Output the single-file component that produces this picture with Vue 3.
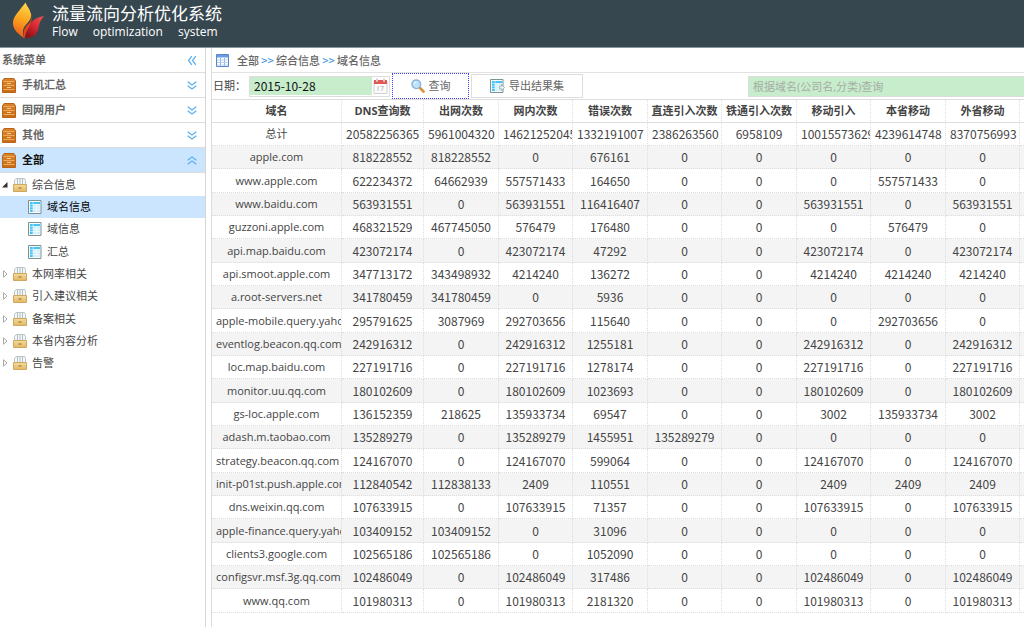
<script setup>
import { ref } from 'vue'

const date = ref('2015-10-28')
const keyword = ref('')
const groups = ['手机汇总', '固网用户', '其他', '全部']
const leaves = ['域名信息', '域信息', '汇总']
const folders = ['本网率相关', '引入建议相关', '备案相关', '本省内容分析', '告警']
const columns = ['域名', 'DNS查询数', '出网次数', '网内次数', '错误次数', '直连引入次数', '铁通引入次数', '移动引入', '本省移动', '外省移动']
const rows = [
  ['总计', 20582256365, 5961004320, 14621252045, 1332191007, 2386263560, 6958109, 10015573629, 4239614748, 8370756993],
  ['apple.com', 818228552, 818228552, 0, 676161, 0, 0, 0, 0, 0],
  ['www.apple.com', 622234372, 64662939, 557571433, 164650, 0, 0, 0, 557571433, 0],
  ['www.baidu.com', 563931551, 0, 563931551, 116416407, 0, 0, 563931551, 0, 563931551],
  ['guzzoni.apple.com', 468321529, 467745050, 576479, 176480, 0, 0, 0, 576479, 0],
  ['api.map.baidu.com', 423072174, 0, 423072174, 47292, 0, 0, 423072174, 0, 423072174],
  ['api.smoot.apple.com', 347713172, 343498932, 4214240, 136272, 0, 0, 4214240, 4214240, 4214240],
  ['a.root-servers.net', 341780459, 341780459, 0, 5936, 0, 0, 0, 0, 0],
  ['apple-mobile.query.yaho', 295791625, 3087969, 292703656, 115640, 0, 0, 0, 292703656, 0],
  ['eventlog.beacon.qq.com', 242916312, 0, 242916312, 1255181, 0, 0, 242916312, 0, 242916312],
  ['loc.map.baidu.com', 227191716, 0, 227191716, 1278174, 0, 0, 227191716, 0, 227191716],
  ['monitor.uu.qq.com', 180102609, 0, 180102609, 1023693, 0, 0, 180102609, 0, 180102609],
  ['gs-loc.apple.com', 136152359, 218625, 135933734, 69547, 0, 0, 3002, 135933734, 3002],
  ['adash.m.taobao.com', 135289279, 0, 135289279, 1455951, 135289279, 0, 0, 0, 0],
  ['strategy.beacon.qq.com', 124167070, 0, 124167070, 599064, 0, 0, 124167070, 0, 124167070],
  ['init-p01st.push.apple.com', 112840542, 112838133, 2409, 110551, 0, 0, 2409, 2409, 2409],
  ['dns.weixin.qq.com', 107633915, 0, 107633915, 71357, 0, 0, 107633915, 0, 107633915],
  ['apple-finance.query.yaho', 103409152, 103409152, 0, 31096, 0, 0, 0, 0, 0],
  ['clients3.google.com', 102565186, 102565186, 0, 1052090, 0, 0, 0, 0, 0],
  ['configsvr.msf.3g.qq.com', 102486049, 0, 102486049, 317486, 0, 0, 102486049, 0, 102486049],
  ['www.qq.com', 101980313, 0, 101980313, 2181320, 0, 0, 101980313, 0, 101980313],
]
</script>

<template>
  <div class="app">
    <svg class="defs" aria-hidden="true">
      <defs>
        <linearGradient id="wood" x1="0" y1="0" x2="0" y2="1">
          <stop offset="0" stop-color="#d9842c" /><stop offset="1" stop-color="#c66c14" />
        </linearGradient>
        <linearGradient id="box" x1="0" y1="0" x2="0" y2="1">
          <stop offset="0" stop-color="#f5dc9c" /><stop offset="1" stop-color="#e3b763" />
        </linearGradient>
        <linearGradient id="flameL" x1="0.7" y1="0" x2="0.5" y2="1">
          <stop offset="0" stop-color="#ffd84a" /><stop offset="0.5" stop-color="#fba31e" /><stop offset="1" stop-color="#ee5a1c" />
        </linearGradient>
        <linearGradient id="flameR" x1="1" y1="0" x2="0.3" y2="1">
          <stop offset="0" stop-color="#f0564a" /><stop offset="0.5" stop-color="#dc2a36" /><stop offset="1" stop-color="#8e1218" />
        </linearGradient>
        <symbol id="i-cabinet" viewBox="0 0 14 15">
          <path d="M2 .500h10L13.500 3v11.500H.500V3z" fill="url(#wood)" stroke="#b9641a" />
          <path d="M1.500 3.500h11M1.500 7.500h11M1.500 11.500h11" stroke="#f0ac5c" />
          <path d="M5 5.500h4M5 9.500h4" stroke="#f7cf94" />
        </symbol>
        <symbol id="i-folder" viewBox="0 0 14 14">
          <path d="M1.500 8V2.500L3 .500h8.500l1 2V8z" fill="#f4f7f7" stroke="#b9c5c7" />
          <path d="M4.500 1v6M7 1v6M9.500 1v6" stroke="#9fb1b4" stroke-width=".8" />
          <path d="M.500 6.500h13v7H.500z" fill="url(#box)" stroke="#cfa75e" />
          <path d="M5.500 10h3" stroke="#8a6a35" />
        </symbol>
        <symbol id="i-sheet" viewBox="0 0 14 14">
          <path d="M.500.500h12.500v13H.500z" fill="#f7fcff" stroke="#7c9295" />
          <path d="M2 2h10v2.500H2zM2 2h3v10H2z" fill="#45c4f7" />
          <path d="M5 4.500h7V12H5z" fill="#d3eefa" />
          <path d="M2 4.500h10M2 7h10M2 9.500h10M5 2v10M8.500 4v8" stroke="#fff" stroke-width=".5" />
        </symbol>
        <symbol id="i-chevrons" viewBox="0 0 10 9">
          <path d="M.700.700 5 4 9.300.700M.700 4.700 5 8l4.300-3.300" fill="none" stroke="#5eb0ee" stroke-width="1.300" />
        </symbol>
      </defs>
    </svg>

    <header class="banner">
      <svg class="logo" viewBox="0 0 34 37" aria-hidden="true">
        <path d="M14 0C9 7 1 14 1 21c0 7 5 11 12 16-3-6-2-11 2-15 4-4 6-8 4-12-1-4-4-6-5-10z" fill="url(#flameL)" />
        <path d="M33 14c-6 0-12 4-14 8-3 5-6 9-5 15 8-1 12-4 13-10 1-5 2-9 6-13z" fill="url(#flameR)" />
        <path d="M19 11c3 5 0 9-4 13-3 4-4 8-2 13 1-8 5-11 6-15 2-4 2-8 0-11z" fill="#e4431d" />
      </svg>
      <div>
        <h1>流量流向分析优化系统</h1>
        <p><span>Flow</span><span>optimization</span><span>system</span></p>
      </div>
    </header>

    <div class="body">
      <aside>
        <div class="bar">
          <h2>系统菜单</h2>
          <button class="collapse" aria-label="收起菜单"><svg class="chev left"><use href="#i-chevrons" /></svg></button>
        </div>
        <button v-for="(g, i) in groups" :key="g" class="bar group" :class="{ open: i === 3 }">
          <svg class="cabinet"><use href="#i-cabinet" /></svg>
          <span>{{ g }}</span>
          <svg class="chev" :class="{ up: i === 3 }"><use href="#i-chevrons" /></svg>
        </button>
        <nav class="tree">
          <a href="#"><svg class="arrow" viewBox="0 0 8 8"><path d="M6.500 1v5.500H1z" fill="#333" /></svg><svg class="icon"><use href="#i-folder" /></svg>综合信息</a>
          <a v-for="(l, i) in leaves" :key="l" href="#" class="leaf" :class="{ selected: i === 0 }"><svg class="icon"><use href="#i-sheet" /></svg>{{ l }}</a>
          <a v-for="f in folders" :key="f" href="#"><svg class="arrow" viewBox="0 0 8 8"><path d="M2.500.700v6.600L6 4z" fill="#fff" stroke="#aaa" /></svg><svg class="icon"><use href="#i-folder" /></svg>{{ f }}</a>
        </nav>
      </aside>

      <main>
        <nav class="crumbs">
          <svg class="grid-icon" viewBox="0 0 13 13" aria-hidden="true">
            <path d="M.500.500h12v12H.500z" fill="#fff" stroke="#5686cf" />
            <path d="M1 1h11v2.500H1z" fill="#6b9be0" />
            <path d="M4.500 4v8M8.500 4v8" stroke="#8fb0e2" />
            <path d="M1 6h11M1 8.500h11M1 11h11" stroke="#b9cfee" />
          </svg>
          <a href="#">全部</a><i>&gt;&gt;</i><a href="#">综合信息</a><i>&gt;&gt;</i><a href="#">域名信息</a>
        </nav>

        <form class="toolbar" @submit.prevent>
          <label for="date">日期：</label>
          <div class="date">
            <input id="date" v-model="date" type="text">
            <button type="button" aria-label="选择日期">
              <svg viewBox="0 0 15 16">
                <path d="M1 3h13v12.500H1z" fill="#fbfbfb" stroke="#cfcfcf" />
                <path d="M1 2h13v4H1z" fill="#e05a55" />
                <path d="M4 .500v3M11 .500v3" stroke="#fff" stroke-width="2" />
                <path d="M4 .500v3M11 .500v3" stroke="#b6a0a0" />
                <path d="M5 8v5M7.500 8.500h3L8.500 13" fill="none" stroke="#c2c2c2" />
              </svg>
            </button>
          </div>
          <button class="query" type="submit">
            <svg viewBox="0 0 14 14">
              <path d="m8.500 8.500 4 4" stroke="#d9913d" stroke-width="2.600" stroke-linecap="round" />
              <circle cx="5.300" cy="5.300" r="4.300" fill="#bfe3fb" stroke="#86b4dc" stroke-width="1.400" />
              <path d="M3 5a2.500 2.500 0 0 1 2.500-2.300" fill="none" stroke="#fff" />
            </svg>查询
          </button>
          <button class="export" type="button">
            <svg viewBox="0 0 15 14">
              <use href="#i-sheet" width="14" height="14" />
              <path d="M9.500 7.200H11.500V5.500L14.500 8.500 11.500 11.500V9.800H9.500z" fill="#eef5f5" stroke="#93a9aa" stroke-width=".8" />
            </svg>导出结果集
          </button>
          <input v-model="keyword" class="search" type="text" aria-label="查询关键字" placeholder="根据域名(公司名,分类)查询">
        </form>

        <table>
          <colgroup><col class="c-name"><col class="c-dns"><col v-for="n in 8" :key="n" :class="n % 2 ? 'c-a' : 'c-b'"><col></colgroup>
          <thead>
            <tr><th v-for="c in columns" :key="c" scope="col">{{ c }}</th><td class="rest"></td></tr>
          </thead>
          <tbody>
            <tr v-for="r in rows" :key="r[0]"><td v-for="(v, i) in r" :key="i" :class="{ name: i === 0 }">{{ v }}</td><td class="rest"></td></tr>
          </tbody>
        </table>
      </main>
    </div>
  </div>
</template>

<style>
html, body { margin: 0; background: #fff; }
</style>

<style scoped>
.app {
  font: 11px/16px "Open Sans", "Noto Sans CJK SC", sans-serif;
  color: #444;
  min-height: 100vh;
  display: flex;
  flex-direction: column;
  overflow: hidden;
}
.app * { box-sizing: border-box; }
.defs { position: absolute; width: 0; height: 0; }
svg { flex: none; display: block; }
button, input { font: inherit; color: inherit; margin: 0; }
a { color: inherit; text-decoration: none; }

.banner {
  height: 48px;
  display: flex;
  gap: 7px;
  padding: 1px 0 0 12px;
  background: #36474f;
  border-bottom: 1px solid #8b969c;
  color: #fff;
}
.logo { width: 33px; height: 37px; margin-top: 1px; }
h1 { margin: 0; font: 400 17px/24px "Noto Sans CJK SC", sans-serif; }
.banner p { margin: 0; display: flex; gap: 15px; font-size: 12px; line-height: 14px; }

.body { flex: 1; display: flex; gap: 5px; }
aside { width: 206px; flex: none; border-right: 1px solid #d6d6d6; }
.bar {
  width: 100%;
  height: 25px;
  display: flex;
  align-items: center;
  padding: 0 8px 0 2px;
  border: 0;
  border-bottom: 1px solid #dcdcdc;
  background: #fff;
  color: #666;
  text-align: left;
}
.bar h2 { flex: 1; margin: 0; font: inherit; font-weight: 700; }
.group { gap: 6px; font-weight: 700; }
.group span { flex: 1; }
.group.open { background: #cce5ff; color: #111; }
.collapse { border: 0; padding: 0; background: none; }
.cabinet { width: 14px; height: 15px; }
.chev { width: 10px; height: 9px; }
.chev.up { transform: rotate(180deg); }
.chev.left { transform: rotate(90deg); }
.tree a { display: flex; align-items: center; height: 22px; padding-left: 1px; }
.tree a:nth-child(3n + 1) { height: 23px; }
.tree .leaf { padding-left: 28px; }
.tree .selected { background: #cce5ff; color: #000; }
.arrow { width: 8px; height: 8px; margin-right: 4px; }
.icon { width: 14px; height: 14px; margin-right: 5px; }

main { flex: 1; min-width: 0; border-left: 1px solid #dcdcdc; }
.crumbs {
  height: 25px;
  display: flex;
  align-items: center;
  padding-left: 4px;
  border-bottom: 1px solid #e2e2e2;
  color: #666;
  font-weight: 500;
  font-family: "Noto Sans CJK SC", sans-serif;
}
.crumbs i { width: 17px; text-align: center; font-style: normal; color: #3a97dc; }
.grid-icon { width: 13px; height: 13px; margin-right: 8px; }

.toolbar { height: 26px; display: flex; align-items: center; padding-left: 1px; }
.toolbar label { width: 36px; }
.date { width: 141px; height: 21px; display: flex; border: 1px solid #ddd; background: #fff; }
.date input, .search {
  border: 0;
  outline: 0;
  background: #c7edcc;
  padding: 0 4px;
}
.date input { flex: 1; min-width: 0; height: 18px; font: 12px/16px "Noto Sans CJK SC", sans-serif; color: #111; }
.date button { border: 0; padding: 1px; background: none; }
.date svg { width: 15px; height: 16px; }
.query, .export {
  display: flex;
  align-items: center;
  justify-content: center;
  gap: 4px;
  padding: 0;
  background: #fff;
  color: #666;
}
.query svg { width: 14px; height: 14px; }
.export svg { width: 15px; height: 14px; }
.query { width: 77px; height: 26px; margin-left: 2px; border: 1px dotted #3c3cff; }
.export { width: 112px; height: 24px; margin-left: 2px; border: 1px solid #ddd; }
.search { flex: 1; min-width: 0; height: 21px; margin-left: 165px; border: 1px solid #ddd; border-right: 0; }
.search::placeholder { color: #a5aca5; opacity: 1; }

table { width: 100%; table-layout: fixed; border-collapse: separate; border-spacing: 0; }
.c-name { width: 130px; }
.c-dns { width: 82px; }
.c-a { width: 75px; }
.c-b { width: 74px; }
th, td {
  height: 23px;
  padding: 0 4px;
  overflow: hidden;
  white-space: nowrap;
  text-align: center;
  border-right: 1px dotted #ddd;
  border-bottom: 1px dotted #ddd;
  line-height: 16px;
}
th { height: 24px; font-weight: 700; padding: 0 2px; border-top: 1px solid #ddd; border-bottom: 1px solid #ddd; }
thead .rest { border-top: 1px solid #ddd; border-bottom: 1px solid #ddd; }
.rest { padding: 0; border-right: 0; }
td { font-family: "Noto Sans CJK SC", sans-serif; font-size: 12px; }
td.name { font-family: "Open Sans", "Noto Sans CJK SC", sans-serif; font-size: 11px; }
tbody tr:nth-child(3n) td { height: 24px; }
tbody tr:nth-child(2n) { background: #f4f4f4; }
</style>
